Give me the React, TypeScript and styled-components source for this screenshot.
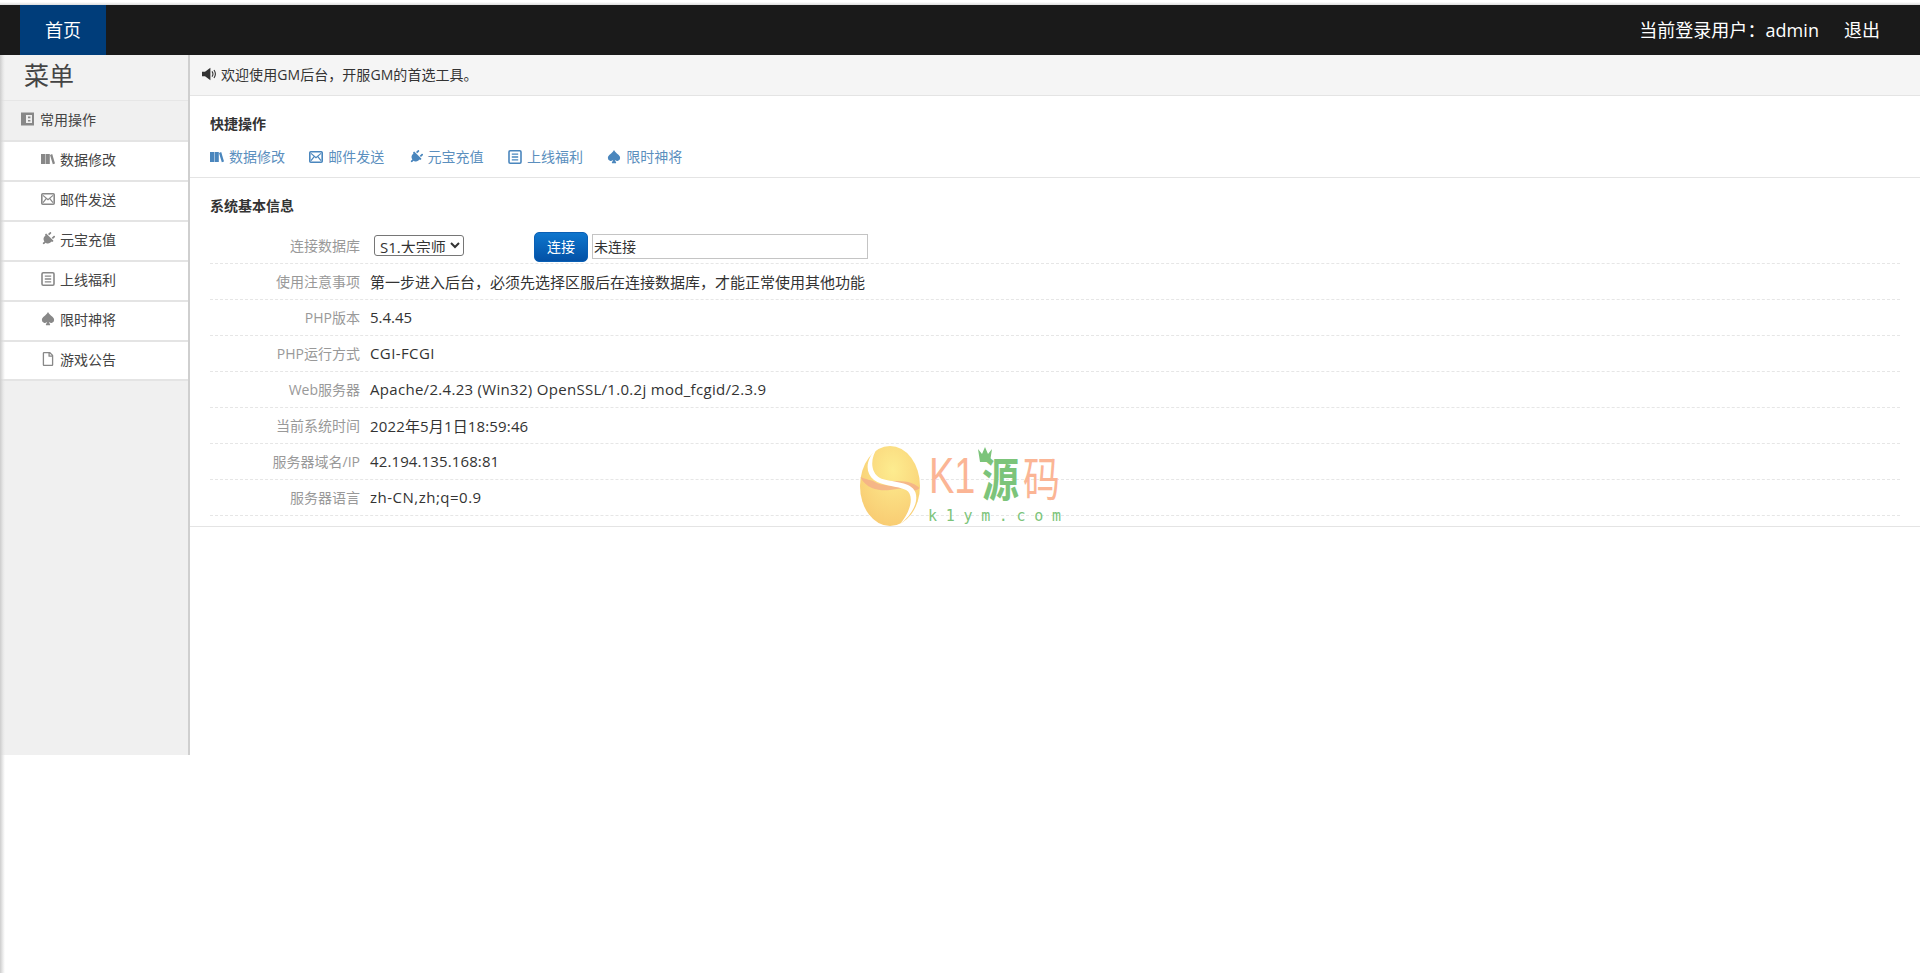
import React from 'react';
import styled, { createGlobalStyle } from 'styled-components';
import { FaPlug, FaRegFile } from 'react-icons/fa';
import { BsSuitSpadeFill } from 'react-icons/bs';

const GlobalStyle = createGlobalStyle`
  html, body {
    margin: 0;
    padding: 0;
    background: #fff;
  }
  body {
    font-family: "Open Sans", "Noto Sans CJK SC", sans-serif;
    font-size: 14px;
    color: #333;
  }
  * {
    box-sizing: border-box;
  }
`;

const Page = styled.div`
  position: relative;
  width: 1920px;
  height: 973px;
  overflow: hidden;
  padding-top: 5px;
  background: linear-gradient(180deg, #fff 0, #fff 2px, #dcdcdc 5px, #fff 5px);
`;

const EdgeShadow = styled.div`
  position: absolute;
  left: 0;
  top: 55px;
  width: 5px;
  bottom: 0;
  background: linear-gradient(90deg, #cdcdcd 0%, rgba(225, 225, 225, 0.6) 60%, rgba(255, 255, 255, 0) 100%);
  pointer-events: none;
`;

const TopBar = styled.header`
  height: 50px;
  background: #1a1a1a;
  display: flex;
  align-items: stretch;
  justify-content: space-between;
  padding: 0 40px 0 20px;
  color: #fff;
  font-size: 18px;
`;

const HomeTab = styled.a`
  width: 86px;
  padding-bottom: 2px;
  background: #003d7a;
  color: #fff;
  display: flex;
  align-items: center;
  justify-content: center;
`;

const UserArea = styled.div`
  display: flex;
  align-items: center;
  gap: 25px;
  padding-bottom: 2px;
`;

const UserName = styled.span`
  letter-spacing: 0.05px;
`;

const Main = styled.div`
  display: flex;
  align-items: flex-start;
`;

const Sidebar = styled.aside`
  width: 190px;
  height: 700px;
  background: #f0f0f0;
  border-right: 2px solid #cfcfcf;
  flex: none;
`;

const MenuTitle = styled.div`
  height: 46px;
  padding-left: 24px;
  font-size: 25px;
  line-height: 40px;
  color: #444;
  background: #f2f2f2;
  border-bottom: 1px solid #e6e6e6;
`;

const MenuGroup = styled.div`
  height: 39px;
  display: flex;
  align-items: center;
  gap: 5px;
  padding: 0 0 4px 20px;
  color: #444;
  font-size: 14px;
  svg {
    color: #888;
    width: 15px;
    height: 14px;
  }
`;

const MenuItem = styled.a`
  height: 40px;
  display: flex;
  align-items: center;
  gap: 5px;
  padding: 0 0 4px 41px;
  background: #fff;
  border-top: 2px solid #e4e4e4;
  color: #444;
  svg {
    width: 14px;
    height: 14px;
    color: #888;
    flex: none;
  }
  &:last-child {
    height: 41px;
    border-bottom: 2px solid #e4e4e4;
  }
`;

const Content = styled.main`
  flex: 1;
  min-width: 0;
`;

const Notice = styled.div`
  height: 41px;
  background: #f5f5f5;
  border-bottom: 1px solid #e4e4e4;
  display: flex;
  align-items: center;
  gap: 5px;
  padding: 0 0 2px 12px;
  font-size: 14px;
  letter-spacing: 0.06px;
  svg {
    color: #333;
    width: 14px;
    height: 14px;
  }
`;

const Section = styled.section<{ $height: number }>`
  height: ${(p) => p.$height}px;
  padding: 0 20px;
  border-bottom: 1px solid #e4e4e4;
`;

const SectionTitle = styled.h3<{ $top: number }>`
  margin: 0;
  padding-top: ${(p) => p.$top}px;
  font-size: 14px;
  line-height: 20px;
  font-weight: 700;
  color: #333;
`;

const QuickLinks = styled.div`
  display: flex;
  gap: 24.3px;
  margin-top: 13px;
`;

const QuickLink = styled.a`
  display: flex;
  align-items: center;
  gap: 5px;
  line-height: 20px;
  color: #5b8fbe;
  svg {
    width: 14px;
    height: 14px;
    color: #4a86bd;
    flex: none;
  }
`;

const InfoTable = styled.div`
  margin-top: 11px;
`;

const InfoRow = styled.div<{ $height?: number }>`
  height: ${(p) => p.$height ?? 36}px;
  padding-bottom: 1px;
  display: flex;
  align-items: center;
  border-bottom: 1px dashed #e6e6e6;
`;

const InfoLabel = styled.div`
  width: 150px;
  text-align: right;
  color: #999;
  flex: none;
`;

const InfoValue = styled.div<{ $tracking: number }>`
  margin-left: 10px;
  font-size: 15px;
  letter-spacing: ${(p) => p.$tracking}px;
  color: #333;
  white-space: nowrap;
`;

const FormCell = styled.div`
  display: flex;
  align-items: center;
  margin-left: 14px;
  padding-top: 4px;
`;

const ServerSelect = styled.select`
  width: 90px;
  height: 21px;
  margin-top: -2px;
  font-family: inherit;
  font-size: 15px;
  color: #333;
  background: #fff;
  border: 1px solid #767676;
  border-radius: 3px;
  padding: 0 0 2px 1px;
`;

const ConnectButton = styled.button`
  width: 54px;
  height: 30px;
  margin-left: 70px;
  border: 1px solid #0a5fb4;
  border-radius: 5px;
  background: linear-gradient(180deg, #0f76cd 0%, #0351a6 100%);
  color: #fff;
  font-family: inherit;
  font-size: 14px;
  padding: 0 0 2px;
`;

const StatusInput = styled.input`
  width: 276px;
  height: 25px;
  margin-left: 4px;
  border: 1px solid #c4c4c4;
  padding: 0 1px;
  font-family: inherit;
  font-size: 14px;
  color: #333;
  background: #fff;
  &::placeholder {
    color: #333;
    opacity: 1;
  }
`;

const Watermark = styled.svg`
  position: absolute;
  left: 858px;
  top: 444px;
  width: 210px;
  height: 86px;
  overflow: visible;
  pointer-events: none;
`;

const TiltedPlug = styled(FaPlug)`
  transform: rotate(45deg);
`;

const BooksIcon = () => (
  <svg viewBox="0 0 14 14" fill="currentColor">
    <rect x="0" y="2" width="4.2" height="10" />
    <rect x="4.6" y="2" width="4.2" height="10" />
    <path d="M9 3 11.2 2 14 11.4 11.8 12.2Z" />
  </svg>
);

const EnvelopeIcon = () => (
  <svg viewBox="0 0 14 14" fill="none" stroke="currentColor">
    <rect x="0.8" y="1.8" width="12.4" height="10.4" rx="1" strokeWidth="1.6" />
    <path d="M2 3.4 7 7.6 12 3.4M2 10.6 5.2 6.6M12 10.6 8.8 6.6" strokeWidth="1.2" />
  </svg>
);

const ListIcon = () => (
  <svg viewBox="0 0 14 14" fill="none" stroke="currentColor">
    <rect x="1" y="0.8" width="12" height="12.4" rx="1.2" strokeWidth="1.6" />
    <path d="M3.8 4.2H10.2M3.8 7H10.2M3.8 9.8H10.2" strokeWidth="1.3" />
  </svg>
);

const ContactsIcon = () => (
  <svg viewBox="0 0 15 14" fill="currentColor">
    <path
      fillRule="evenodd"
      d="M1 0.5H14V13.5H1ZM6 3V11H12V3ZM8 4.6V6.2H10.4V4.6ZM8 7.9V9.5H10.4V7.9Z"
    />
  </svg>
);

const SpeakerIcon = () => (
  <svg viewBox="0 0 14 14">
    <path fill="currentColor" d="M0 4.8H3L8.4 0.8V13.2L3 9.2H0Z" />
    <path fill="none" stroke="currentColor" strokeWidth="1.1" d="M10 4.4C11.2 6 11.2 8 10 9.6M12 3C13.8 5.6 13.8 8.4 12 11" />
  </svg>
);

const menuItems = [
  { name: '数据修改', icon: <BooksIcon /> },
  { name: '邮件发送', icon: <EnvelopeIcon /> },
  { name: '元宝充值', icon: <TiltedPlug /> },
  { name: '上线福利', icon: <ListIcon /> },
  { name: '限时神将', icon: <BsSuitSpadeFill /> },
  { name: '游戏公告', icon: <FaRegFile /> },
];

const infoRows = [
  { label: '使用注意事项', value: '第一步进入后台，必须先选择区服后在连接数据库，才能正常使用其他功能', tracking: 0 },
  { label: 'PHP版本', value: '5.4.45', tracking: 0 },
  { label: 'PHP运行方式', value: 'CGI-FCGI', tracking: 0.4 },
  { label: 'Web服务器', value: 'Apache/2.4.23 (Win32) OpenSSL/1.0.2j mod_fcgid/2.3.9', tracking: 0.3 },
  { label: '当前系统时间', value: '2022年5月1日18:59:46', tracking: 0.15 },
  { label: '服务器域名/IP', value: '42.194.135.168:81', tracking: 0.12 },
  { label: '服务器语言', value: 'zh-CN,zh;q=0.9', tracking: 0.5 },
];

const App: React.FC = () => {
  return (
    <Page>
      <GlobalStyle />
      <TopBar>
        <HomeTab>首页</HomeTab>
        <UserArea>
          <UserName>当前登录用户：admin</UserName>
          <span>退出</span>
        </UserArea>
      </TopBar>
      <Main>
        <Sidebar>
          <MenuTitle>菜单</MenuTitle>
          <MenuGroup>
            <ContactsIcon />
            常用操作
          </MenuGroup>
          <div>
            {menuItems.map((item) => (
              <MenuItem key={item.name}>
                {item.icon}
                {item.name}
              </MenuItem>
            ))}
          </div>
        </Sidebar>
        <Content>
          <Notice>
            <SpeakerIcon />
            欢迎使用GM后台，开服GM的首选工具。
          </Notice>
          <Section $height={82}>
            <SectionTitle $top={18}>快捷操作</SectionTitle>
            <QuickLinks>
              {menuItems.slice(0, 5).map((item) => (
                <QuickLink key={item.name}>
                  {item.icon}
                  {item.name}
                </QuickLink>
              ))}
            </QuickLinks>
          </Section>
          <Section $height={349}>
            <SectionTitle $top={18}>系统基本信息</SectionTitle>
            <InfoTable>
              <InfoRow $height={37}>
                <InfoLabel>连接数据库</InfoLabel>
                <FormCell>
                  <ServerSelect defaultValue="s1">
                    <option value="s1">S1.大宗师</option>
                  </ServerSelect>
                  <ConnectButton>连接</ConnectButton>
                  <StatusInput placeholder="未连接" />
                </FormCell>
              </InfoRow>
              {infoRows.map((row) => (
                <InfoRow key={row.label}>
                  <InfoLabel>{row.label}</InfoLabel>
                  <InfoValue $tracking={row.tracking}>{row.value}</InfoValue>
                </InfoRow>
              ))}
            </InfoTable>
          </Section>
        </Content>
      </Main>
      <EdgeShadow />
      <Watermark viewBox="0 0 210 86">
        <defs>
          <radialGradient id="egg" cx="0.55" cy="0.3" r="0.8">
            <stop offset="0" stopColor="#fdec8f" />
            <stop offset="1" stopColor="#f8c86f" />
          </radialGradient>
        </defs>
        <ellipse cx="32" cy="42" rx="30" ry="40" fill="url(#egg)" />
        <path d="M2.5 33C9 36 14 36 17 38C22 42 36 41 46 44L32 46C24 47 8 46 2.5 33Z" fill="#f3a98a" opacity="0.75" />
        <path d="M61.5 44C54 36 40 37 30 37L48 45C54 47.5 58 47.5 61.5 44Z" fill="#f3a98a" opacity="0.75" />
        <path d="M20 3C8 14 6 28 16 36C24 42 40 42 48 46C56 50 54 66 42 80C58 68 62 52 55 44.5C48 37 30 38 22 34C12 28 12 14 20 3Z" fill="#fff" />
        <text transform="translate(71 49) scale(1 1.32)" fontFamily="'Liberation Sans', sans-serif" fontSize="38" fill="#fbb595">K1</text>
        <text transform="translate(124 52) scale(1 1.25)" fontFamily="'Noto Sans CJK SC', sans-serif" fontWeight="700" fontSize="37" fill="#7cc47a">源</text>
        <text transform="translate(165 52) scale(1 1.25)" fontFamily="'Noto Sans CJK SC', sans-serif" fontSize="37" fill="#fbb595">码</text>
        <path d="M120 5L124 10L127 3L130 10L134 5L132 18L122 18Z" fill="#7cc47a" />
        <text x="70" y="77" fontFamily="'DejaVu Sans Mono', monospace" fontSize="15" fill="#7cc47a" textLength="133">k1ym.com</text>
      </Watermark>
    </Page>
  );
};

export default App;
